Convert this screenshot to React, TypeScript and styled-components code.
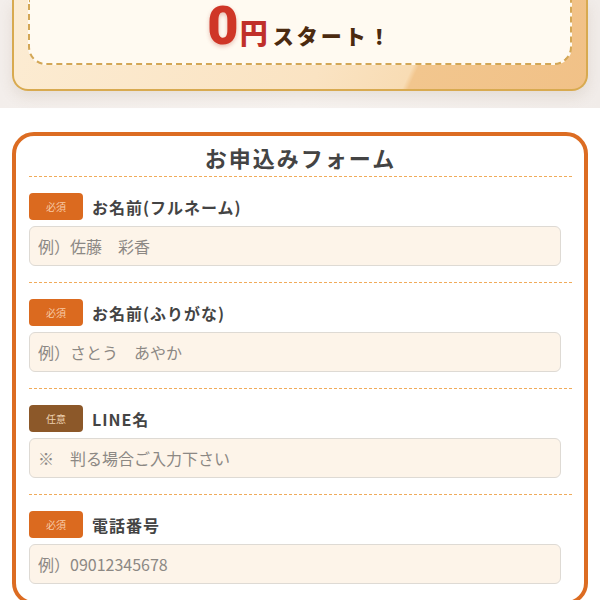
import styled, { createGlobalStyle } from "styled-components";

const GlobalStyle = createGlobalStyle`
  * { box-sizing: border-box; }
  body {
    margin: 0;
    background: #ffffff;
    font-family: "Noto Sans CJK JP", "Noto Sans", sans-serif;
    color: #444;
  }
`;

interface Field {
  label: string;
  required: boolean;
  placeholder: string;
}

const fields: Field[] = [
  { label: "お名前(フルネーム)", required: true, placeholder: "例）佐藤　彩香" },
  { label: "お名前(ふりがな)", required: true, placeholder: "例）さとう　あやか" },
  { label: "LINE名", required: false, placeholder: "※　判る場合ご入力下さい" },
  { label: "電話番号", required: true, placeholder: "例）09012345678" },
];

export default function App() {
  return (
    <Page>
      <GlobalStyle />
      <HeroArea>
        <HeroCard>
          <HeroInner>
            <PriceLine>
              <Zero>0</Zero>
              <Yen>円</Yen>
              <Start>スタート！</Start>
            </PriceLine>
          </HeroInner>
        </HeroCard>
      </HeroArea>

      <FormCard>
        <FormTitle>お申込みフォーム</FormTitle>
        {fields.map((f) => (
          <FieldRow key={f.label}>
            <FieldHead>
              <Badge $required={f.required}>{f.required ? "必須" : "任意"}</Badge>
              <Label>{f.label}</Label>
            </FieldHead>
            <Input type="text" placeholder={f.placeholder} />
          </FieldRow>
        ))}
      </FormCard>
    </Page>
  );
}

const Page = styled.div`
  width: 600px;
  overflow: hidden;
`;

const HeroArea = styled.section`
  background: linear-gradient(90deg, #f3eeeb 0%, #f7f3f0 50%, #f1ece9 100%);
  padding: 0 12px 17px;
`;

const HeroCard = styled.div`
  border: 2px solid #d8aa50;
  border-top: none;
  border-radius: 0 0 16px 16px;
  padding: 0 14px 24px;
  background: linear-gradient(
    115deg,
    #fcecd3 0%,
    #fae3c2 55%,
    #f8dcb4 70%,
    #f2c68e 71%,
    #f1c187 100%
  );
  box-shadow: 0 6px 14px rgba(120, 90, 60, 0.12);
`;

const HeroInner = styled.div`
  background: #fffaf1;
  border: 2px dashed #d3a756;
  border-top: none;
  border-radius: 0 0 18px 18px;
  padding: 5px 0 16px;
  display: flex;
  justify-content: center;
`;

const PriceLine = styled.div`
  display: flex;
  align-items: baseline;
  font-weight: 900;
  line-height: 1;
`;

const Zero = styled.span`
  font-family: "Roboto", "Liberation Sans", sans-serif;
  font-size: 54px;
  line-height: 42px;
  font-weight: 900;
  color: #cf3627;
  text-shadow: 0 2px 4px rgba(180, 60, 40, 0.3);
`;

const Yen = styled.span`
  font-size: 28px;
  font-weight: 900;
  color: #c0302a;
  margin-left: 1px;
`;

const Start = styled.span`
  font-size: 21px;
  font-weight: 900;
  color: #4b2a10;
  letter-spacing: 3px;
  margin-left: 5px;
`;

const FormCard = styled.section`
  margin: 24px 12px 0;
  border: 4px solid #dc6c22;
  border-radius: 22px;
  padding: 0 12px 0 13px;
  background: #fff;
`;

const FormTitle = styled.h2`
  margin: 5px 0 0;
  padding-bottom: 3px;
  line-height: 32px;
  font-size: 22px;
  font-weight: 700;
  text-align: center;
  letter-spacing: 2px;
  color: #444;
  border-bottom: 1px dashed #f0ab5a;
`;

const FieldRow = styled.div`
  padding: 16px 0;
  border-bottom: 1px dashed #f0ab5a;
  display: flex;
  flex-direction: column;
  gap: 6px;
`;

const FieldHead = styled.div`
  display: flex;
  align-items: center;
  gap: 9px;
  height: 27px;
`;

const Badge = styled.span<{ $required: boolean }>`
  width: 54px;
  height: 27px;
  border-radius: 4px;
  display: flex;
  align-items: center;
  justify-content: center;
  font-size: 10px;
  background: ${(p) => (p.$required ? "#db6a1f" : "#8c5829")};
  color: ${(p) => (p.$required ? "#f7c9a6" : "#ecd0b0")};
`;

const Label = styled.span`
  font-size: 16px;
  font-weight: 700;
  letter-spacing: 1px;
  color: #444;
`;

const Input = styled.input`
  width: 98%;
  height: 40px;
  border: 1px solid #dedad4;
  border-radius: 6px;
  background: #fdf4e9;
  padding: 0 8px;
  font-family: "Noto Sans CJK JP", "Noto Sans", sans-serif;
  font-size: 16px;
  color: #444;
  outline: none;
  &::placeholder {
    color: #8c8884;
  }
`;
